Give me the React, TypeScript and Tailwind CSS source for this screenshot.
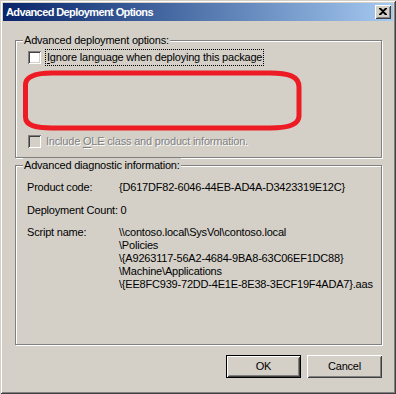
import React from 'react';

const bevel =
  'shadow-[inset_1px_1px_#fff,inset_-1px_-1px_#404040,inset_2px_2px_#d4d0c8,inset_-2px_-2px_#808080]';
const sunken =
  'shadow-[inset_1px_1px_#808080,inset_-1px_-1px_#fff,inset_2px_2px_#404040,inset_-2px_-2px_#d4d0c8]';

function CheckBox({ disabled }: { disabled?: boolean }) {
  return <div className={`w-[13px] h-[13px] shrink-0 ${disabled ? 'bg-[#d4d0c8]' : 'bg-white'} ${sunken}`} />;
}

function GroupBox({ title, className, children }: { title: string; className: string; children: React.ReactNode }) {
  return (
    <div className={`relative border border-[#808080] shadow-[inset_1px_1px_#fff,1px_1px_#fff] ${className}`}>
      <span className="absolute -top-[8px] left-[7px] bg-[#d4d0c8] px-[1px] leading-[14px]">{title}</span>
      {children}
    </div>
  );
}

function Button({ label, isDefault }: { label: string; isDefault?: boolean }) {
  return (
    <div className={`w-[75px] h-[23px] ${isDefault ? 'border border-black' : ''}`}>
      <div className={`w-full h-full flex items-center justify-center bg-[#d4d0c8] ${bevel}`}>{label}</div>
    </div>
  );
}

export default function App() {
  return (
    <div
      className="w-[396px] h-[394px] bg-[#d4d0c8] p-[3px] flex flex-col text-[11px] tracking-[-0.2px] text-black whitespace-nowrap shadow-[inset_1px_1px_#d4d0c8,inset_-1px_-1px_#404040,inset_2px_2px_#fff,inset_-2px_-2px_#808080]"
      style={{ fontFamily: '"Liberation Sans", Arial, sans-serif' }}
    >
      {/* Title bar */}
      <div className="h-[18px] flex items-center bg-gradient-to-r from-[#0a246a] to-[#a6caf0] pl-[3px] pr-[2px]">
        <span className="text-white font-bold tracking-[-0.6px] flex-1">Advanced Deployment Options</span>
        <div className={`w-[16px] h-[14px] flex items-center justify-center bg-[#d4d0c8] ${bevel}`}>
          <svg width="8" height="7" viewBox="0 0 8 7" className="-mt-[1px]">
            <path d="M0 0h2l2 2 2-2h2v1L5 3.5 8 6v1H6L4 5 2 7H0V6l3-2.5L0 1z" fill="black" />
          </svg>
        </div>
      </div>

      {/* Body */}
      <div className="flex flex-col pl-[12px] pr-[11px]">
        <GroupBox title="Advanced deployment options:" className="mt-[19px] h-[118px]">
          <div className="flex items-center pl-[12px] mt-[8px]">
            <CheckBox />
            <span className="ml-[4px] h-[17px] px-[1px] flex items-center border border-dotted border-black">
              <span className="underline underline-offset-2">I</span>gnore language when deploying this package
            </span>
          </div>
          <svg width="286" height="68" className="absolute left-[4px] top-[26px]">
            <path
              d="M32 6 L250 6 C268 6 279 9 279 20 L279 49 C279 57 270 61 250 61 L32 61 C14 61 5.5 58 5.5 50 L5.5 18 C5.5 10 14 6 32 6 Z"
              fill="none"
              stroke="#ed1c24"
              strokeWidth="5"
            />
          </svg>
          <div className="flex items-center pl-[12px] mt-[67px]">
            <CheckBox disabled />
            <span className="ml-[5px] text-[#808080] [text-shadow:1px_1px_#fff]">
              Include <span className="underline underline-offset-2">O</span>LE class and product information.
            </span>
          </div>
        </GroupBox>

        <GroupBox title="Advanced diagnostic information:" className="mt-[7px] h-[180px]">
          <div className="flex flex-col pl-[11px] mt-[15px] leading-[13px]">
            <div className="flex">
              <span className="w-[92px]">Product code:</span>
              <span>{'{D617DF82-6046-44EB-AD4A-D3423319E12C}'}</span>
            </div>
            <div className="flex mt-[10px]">
              <span>Deployment Count: 0</span>
            </div>
            <div className="flex mt-[9px]">
              <span className="w-[92px]">Script name:</span>
              <div className="flex flex-col">
                <span>{'\\\\contoso.local\\SysVol\\contoso.local'}</span>
                <span>{'\\Policies'}</span>
                <span>{'\\{A9263117-56A2-4684-9BA8-63C06EF1DC88}'}</span>
                <span>{'\\Machine\\Applications'}</span>
                <span>{'\\{EE8FC939-72DD-4E1E-8E38-3ECF19F4ADA7}.aas'}</span>
              </div>
            </div>
          </div>
        </GroupBox>

        <div className="flex justify-end gap-[6px] mt-[10px]">
          <Button label="OK" isDefault />
          <Button label="Cancel" />
        </div>
      </div>
    </div>
  );
}
